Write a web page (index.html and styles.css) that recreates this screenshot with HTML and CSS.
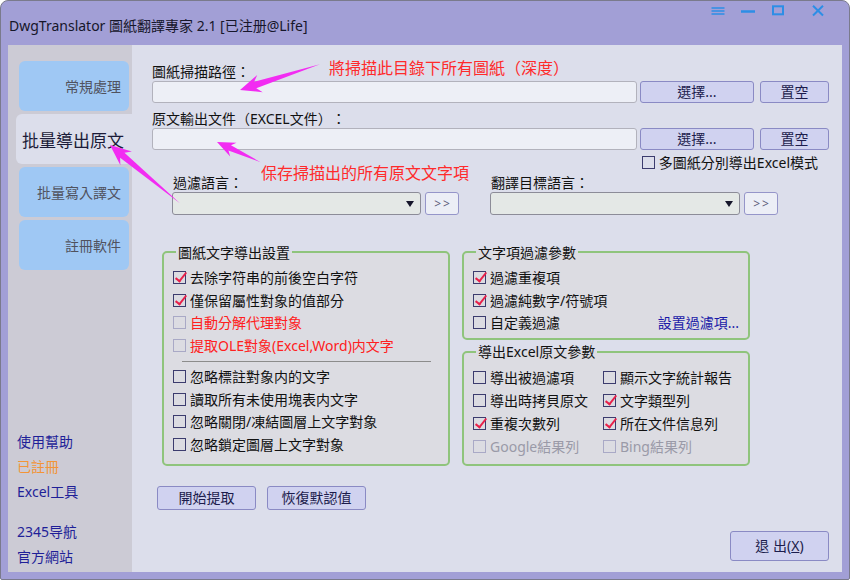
FILE: index.html
```html
<!DOCTYPE html>
<html lang="zh-Hant">
<head>
<meta charset="utf-8">
<title>DwgTranslator</title>
<link rel="stylesheet" href="styles.css">
</head>
<body>
<div class="window">
  <header class="titlebar">
    <span class="title">DwgTranslator 圖紙翻譯專家 2.1 [已注册@Life]</span>
    <div class="controls">
      <svg class="ctl" viewBox="0 0 16 16"><path d="M1.5 5h13M1.5 8h13M1.5 11h13" stroke-width="1.4"/></svg>
      <svg class="ctl" viewBox="0 0 16 16"><path d="M1 8.5h14" stroke-width="2.4"/></svg>
      <svg class="ctl" viewBox="0 0 16 16"><rect x="3" y="3.3" width="10" height="8" stroke-width="2"/></svg>
      <svg class="ctl ctl-close" viewBox="0 0 16 16"><path d="M3 2.8L13 12.5M13 2.8L3 12.5" stroke-width="2"/></svg>
    </div>
  </header>
  <div class="frame">
    <aside class="sidebar">
      <nav class="tabs">
        <div class="tab">常規處理</div>
        <div class="tab active">批量導出原文</div>
        <div class="tab">批量寫入譯文</div>
        <div class="tab">註冊軟件</div>
      </nav>
      <div class="links">
        <a class="link">使用幫助</a>
        <a class="link registered">已註冊</a>
        <a class="link">Excel工具</a>
        <a class="link spaced">2345导航</a>
        <a class="link">官方網站</a>
      </div>
    </aside>
    <main class="content">
      <div class="field-label">圖紙掃描路徑：</div>
      <div class="path-row">
        <div class="input"></div>
        <button class="btn pick">選擇...</button>
        <button class="btn clear">置空</button>
      </div>
      <div class="field-label second">原文輸出文件（EXCEL文件）：</div>
      <div class="path-row">
        <div class="input"></div>
        <button class="btn pick">選擇...</button>
        <button class="btn clear">置空</button>
      </div>
      <label class="check-row"><span class="cb"></span>多圖紙分別導出Excel模式</label>
      <div class="lang-row">
        <div class="lang">
          <div class="field-label">過濾語言：</div>
          <div class="lang-controls">
            <div class="select"><span class="caret"></span></div>
            <button class="more">&gt;&gt;</button>
          </div>
        </div>
        <div class="lang">
          <div class="field-label">翻譯目標語言：</div>
          <div class="lang-controls">
            <div class="select wide"><span class="caret"></span></div>
            <button class="more">&gt;&gt;</button>
          </div>
        </div>
      </div>
      <div class="groups">
        <fieldset class="group group-text">
          <legend>圖紙文字導出設置</legend>
          <label class="opt"><span class="cb checked"></span>去除字符串的前後空白字符</label>
          <label class="opt"><span class="cb checked"></span>僅保留屬性對象的值部分</label>
          <label class="opt warn"><span class="cb disabled"></span>自動分解代理對象</label>
          <label class="opt warn"><span class="cb disabled"></span>提取OLE對象(Excel,Word)内文字</label>
          <hr class="sep">
          <label class="opt"><span class="cb"></span>忽略標註對象内的文字</label>
          <label class="opt"><span class="cb"></span>讀取所有未使用塊表内文字</label>
          <label class="opt"><span class="cb"></span>忽略關閉/凍結圖層上文字對象</label>
          <label class="opt"><span class="cb"></span>忽略鎖定圖層上文字對象</label>
        </fieldset>
        <div class="group-col">
          <fieldset class="group group-filter">
            <legend>文字項過濾參數</legend>
            <label class="opt"><span class="cb checked"></span>過濾重複項</label>
            <label class="opt"><span class="cb checked"></span>過濾純數字/符號項</label>
            <div class="opt"><span class="cb"></span>自定義過濾<a class="setlink">設置過濾項...</a></div>
          </fieldset>
          <fieldset class="group group-export">
            <legend>導出Excel原文參數</legend>
            <div class="opt-grid">
              <label class="opt"><span class="cb"></span>導出被過濾項</label>
              <label class="opt"><span class="cb"></span>顯示文字統計報告</label>
              <label class="opt"><span class="cb"></span>導出時拷貝原文</label>
              <label class="opt"><span class="cb checked"></span>文字類型列</label>
              <label class="opt"><span class="cb checked"></span>重複次數列</label>
              <label class="opt"><span class="cb checked"></span>所在文件信息列</label>
              <label class="opt off"><span class="cb disabled"></span>Google結果列</label>
              <label class="opt off"><span class="cb disabled"></span>Bing結果列</label>
            </div>
          </fieldset>
        </div>
      </div>
      <div class="actions">
        <button class="btn action">開始提取</button>
        <button class="btn action">恢復默認值</button>
      </div>
      <div class="exit-row">
        <button class="btn exit">退 出(<u>X</u>)</button>
      </div>
      <div class="note note-1">將掃描此目錄下所有圖紙（深度）</div>
      <div class="note note-2">保存掃描出的所有原文文字項</div>
    </main>
  </div>
  <svg class="arrows" viewBox="0 0 850 580">
    <polygon transform="translate(240,90) rotate(162.2)" points="0,0 -21,-9 -16,-3.4 -84,0 -16,3.4 -21,9"/>
    <polygon transform="translate(217,142) rotate(-155.1)" points="0,0 -18,-7.5 -14,-3 -48,0 -14,3 -18,7.5"/>
    <polygon transform="translate(110,145) rotate(-140.2)" points="0,0 -21,-9 -16,-3.4 -91,0 -16,3.4 -21,9"/>
  </svg>
</div>
</body>
</html>
```
FILE: styles.css
```css
* {
  box-sizing: border-box;
}

body {
  margin: 0;
  font-family: "Noto Sans", "Noto Sans CJK TC", sans-serif;
  font-size: 14px;
  color: #111;
  text-spacing-trim: space-all;
}

.window {
  position: relative;
  width: 850px;
  height: 580px;
  border: 1px solid #7a7a8c;
  border-radius: 8px 8px 2px 2px;
  background: #a29fd6;
  display: flex;
  flex-direction: column;
  overflow: hidden;
}

/* title bar */
.titlebar {
  height: 44px;
  flex: none;
  display: flex;
  align-items: flex-start;
}

.title {
  padding: 15px 0 0 8px;
  font-size: 14px;
  line-height: 20px;
  color: #16162a;
}

.controls {
  margin-left: auto;
  margin-right: 23px;
  padding-top: 2px;
  display: flex;
  gap: 14px;
}

.ctl {
  width: 16px;
  height: 16px;
  fill: none;
  stroke: #2d8ee6;
}

.ctl-close {
  margin-left: 10px;
}

/* frame */
.frame {
  flex: 1;
  display: flex;
  margin: 0 7px 7px 7px;
  min-height: 0;
}

.sidebar {
  width: 124px;
  flex: none;
  background: #cccbd5;
  display: flex;
  flex-direction: column;
  padding-top: 16px;
}

.tab {
  width: 110px;
  height: 50px;
  margin: 0 0 3px 11px;
  border-radius: 6px;
  background: #9fc8f4;
  display: flex;
  align-items: center;
  justify-content: flex-end;
  padding-right: 8px;
  color: #50525e;
  font-size: 14px;
}

.tab.active {
  width: 116px;
  margin-left: 8px;
  border-radius: 6px 0 0 6px;
  background: #dcdeeb;
  justify-content: flex-start;
  padding: 0 0 0 6px;
  font-size: 17px;
  color: #1b1b38;
}

.links {
  margin-top: auto;
  padding: 0 0 3px 9px;
  display: flex;
  flex-direction: column;
}

.link {
  line-height: 25px;
  color: #1f1f98;
  text-decoration: none;
}

.link.registered {
  color: #f39437;
}

.link.spaced {
  margin-top: 15px;
}

/* content */
.content {
  flex: 1;
  position: relative;
  background: #dcdeeb;
  padding: 17px 13px 0 20px;
}

.field-label {
  line-height: 19px;
  color: #111;
}

.field-label.second {
  margin-top: 6px;
}

.path-row {
  display: flex;
  height: 22px;
}

.input {
  flex: 1;
  height: 22px;
  border: 1px solid #b2b2bc;
  border-radius: 3px;
  background: #edeff6;
}

.btn {
  font: inherit;
  color: #1c1c4c;
  background: #d0d2f0;
  border: 1px solid #8a8ac4;
  border-radius: 3px;
  padding: 0;
  line-height: 20px;
}

.btn.pick {
  width: 114px;
  margin-left: 3px;
}

.btn.clear {
  width: 69px;
  margin-left: 6px;
}

.check-row {
  display: flex;
  justify-content: flex-end;
  align-items: center;
  gap: 4px;
  height: 21px;
  margin-top: 2px;
  padding-right: 11px;
  line-height: 19px;
}

.lang-row {
  display: flex;
  gap: 31px;
  padding-left: 20px;
}

.lang .field-label {
  padding-left: 1px;
}

.lang-controls {
  display: flex;
  gap: 4px;
}

.select {
  width: 249px;
  height: 23px;
  border: 1px solid #8c8c98;
  border-radius: 3px;
  background: #e4e8e6;
  display: flex;
  align-items: center;
  justify-content: flex-end;
  padding-right: 6px;
}

.select.wide {
  width: 250px;
}

.caret {
  width: 0;
  height: 0;
  border-left: 4.5px solid transparent;
  border-right: 4.5px solid transparent;
  border-top: 6px solid #15152a;
}

.more {
  width: 34px;
  height: 23px;
  border: 1px solid #9595c9;
  border-radius: 3px;
  background: #eceef6;
  color: #5c5c7a;
  font-family: "Noto Sans", sans-serif;
  font-size: 12px;
  letter-spacing: 2px;
  padding: 0 0 0 2px;
}

/* checkbox */
.cb {
  position: relative;
  flex: none;
  width: 13px;
  height: 13px;
  border: 1px solid #3c3c6e;
}

.cb.disabled {
  border-color: #a9a9c6;
}

.cb.checked::after {
  content: "";
  position: absolute;
  left: 3.5px;
  top: -2px;
  width: 4px;
  height: 10px;
  border: solid #e8204a;
  border-width: 0 2px 2px 0;
  transform: rotate(38deg);
}

/* groups */
.groups {
  display: flex;
  gap: 12px;
  margin-top: 27.5px;
  padding-left: 10px;
}

.group {
  margin: 0;
  min-width: 0;
  width: 288px;
  border: 2px solid #8fc47c;
  border-radius: 5px;
  background: #dcdce2;
  padding: 5px 9px 7.5px 9px;
}

.group legend {
  line-height: 19px;
  padding: 0 2px;
  margin-left: 3px;
  color: #111;
}

.opt {
  display: flex;
  align-items: center;
  gap: 4px;
  height: 22.5px;
  line-height: 19px;
  color: #111;
}

.opt.warn {
  color: #ff2020;
}

.opt.off {
  color: #9a9aa8;
}

.sep {
  border: none;
  border-top: 1px solid #8c8c8c;
  height: 0;
  margin: 4px 8px 4px 9px;
}

.group-col {
  display: flex;
  flex-direction: column;
}

.group-filter {
  padding-bottom: 4px;
}

.setlink {
  margin-left: auto;
  color: #1a1aa8;
  text-decoration: none;
}

.group-export {
  margin-top: 2px;
  padding: 4.5px 9px 6px 9px;
}

.opt-grid {
  display: grid;
  grid-template-columns: 130px 1fr;
  grid-auto-rows: 23px;
}

.opt-grid .opt {
  height: 23px;
}

/* bottom actions */
.actions {
  display: flex;
  gap: 11px;
  margin-top: 20px;
  padding-left: 5px;
}

.btn.action {
  width: 99px;
  height: 24px;
}

.exit-row {
  display: flex;
  justify-content: flex-end;
  margin-top: 21px;
}

.btn.exit {
  width: 99px;
  height: 30px;
}

/* annotations */
.note {
  position: absolute;
  color: #ff2b2b;
  line-height: 20px;
  white-space: nowrap;
}

.note-1 {
  left: 197px;
  top: 13px;
  font-size: 16px;
}

.note-2 {
  left: 129px;
  top: 118px;
  font-size: 16px;
}

.arrows {
  position: absolute;
  left: -1px;
  top: -1px;
  width: 850px;
  height: 580px;
  pointer-events: none;
  fill: #f22cf2;
}
```
